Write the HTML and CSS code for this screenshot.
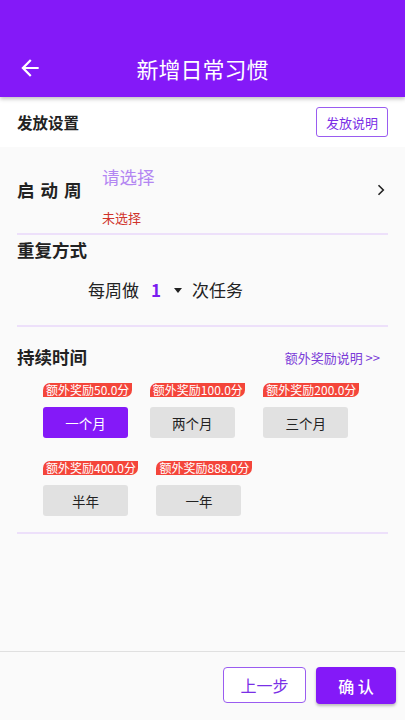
FILE: index.html
```html
<!DOCTYPE html>
<html lang="zh">
<head>
<meta charset="utf-8">
<link rel="stylesheet" href="styles.css">
</head>
<body>
<div class="page">
  <header class="appbar">
    <div class="toolbar">
      <svg class="back" viewBox="0 0 24 24" width="26" height="26"><path d="M20 11H7.83l5.59-5.59L12 4l-8 8 8 8 1.41-1.41L7.83 13H20v-2z" fill="#fff"/></svg>
      <div class="title">新增日常习惯</div>
    </div>
  </header>

  <div class="sec-head">
    <div class="sec-title">发放设置</div>
    <div class="outline-btn small">发放说明</div>
  </div>

  <main class="content">
    <div class="start-row">
      <div class="label spaced">启动周</div>
      <div class="pick">
        <div class="placeholder">请选择</div>
        <div class="unsel">未选择</div>
      </div>
      <svg class="chev" viewBox="0 0 8 12" width="8" height="12"><path d="M1.5 1.2 6.3 6 1.5 10.8" fill="none" stroke="#222" stroke-width="1.6"/></svg>
    </div>
    <div class="divider"></div>

    <div class="label rep-label">重复方式</div>
    <div class="rep-row">
      <span>每周做</span>
      <span class="num">1</span>
      <svg class="caret" viewBox="0 0 8 5" width="8" height="5"><path d="M0 0h8L4 5z" fill="#222"/></svg>
      <span>次任务</span>
    </div>
    <div class="divider"></div>

    <div class="dur-head">
      <div class="label">持续时间</div>
      <div class="link">额外奖励说明 &gt;&gt;</div>
    </div>
    <div class="grid">
      <div class="item"><div class="tag">额外奖励50.0分</div><div class="opt active">一个月</div></div>
      <div class="item"><div class="tag">额外奖励100.0分</div><div class="opt">两个月</div></div>
      <div class="item"><div class="tag">额外奖励200.0分</div><div class="opt">三个月</div></div>
      <div class="item"><div class="tag">额外奖励400.0分</div><div class="opt">半年</div></div>
      <div class="item"><div class="tag">额外奖励888.0分</div><div class="opt">一年</div></div>
    </div>
    <div class="divider"></div>
  </main>

  <footer class="footer">
    <div class="outline-btn big">上一步</div>
    <div class="fill-btn">确 认</div>
  </footer>
</div>
</body>
</html>
```

FILE: styles.css
```css
* { box-sizing: border-box; }
html, body { margin: 0; padding: 0; }
body {
  font-family: "Noto Sans CJK SC", "Noto Sans", sans-serif;
  background: #fafafa;
  color: #222;
}
.page {
  width: 405px;
  height: 720px;
  display: flex;
  flex-direction: column;
  overflow: hidden;
}
.appbar {
  height: 97px;
  background: #8419f8;
  padding-top: 40px;
  box-shadow: 0 2px 4px rgba(0,0,0,0.25);
  position: relative;
  z-index: 2;
  flex: none;
}
.toolbar {
  height: 57px;
  position: relative;
  display: flex;
  align-items: center;
  justify-content: center;
}
.back {
  position: absolute;
  left: 17px;
  top: 15px;
}
.title {
  color: #fff;
  font-size: 22px;
  line-height: 30px;
  margin-top: -1px;
}
.sec-head {
  height: 50px;
  background: #fff;
  display: flex;
  align-items: center;
  justify-content: space-between;
  padding: 0 17px;
  flex: none;
}
.sec-title {
  font-size: 15.5px;
  font-weight: 700;
}
.outline-btn {
  border: 1.5px solid #9a5cf0;
  border-radius: 3px;
  color: #7a2fe6;
  display: flex;
  align-items: center;
  justify-content: center;
  background: #fff;
}
.outline-btn.small {
  width: 72px;
  height: 30px;
  font-size: 13px;
}
.content {
  padding: 0 17px;
  flex: none;
}
.label {
  font-size: 17.5px;
  font-weight: 700;
  line-height: 24px;
}
.label.spaced { letter-spacing: 6px; width: 85px; }
.start-row {
  height: 86px;
  display: flex;
  align-items: center;
}
.pick {
  flex: 1;
  align-self: stretch;
  padding-top: 18px;
}
.placeholder {
  color: #b386f2;
  font-size: 17.5px;
  line-height: 24px;
}
.unsel {
  color: #d0342c;
  font-size: 13px;
  line-height: 18px;
  margin-top: 20px;
}
.chev { margin-right: 3px; }
.divider {
  height: 2px;
  background: #ede0fa;
}
.rep-label { margin-top: 3px; }
.rep-row {
  display: flex;
  align-items: center;
  font-size: 17px;
  line-height: 24px;
  padding-left: 71px;
  margin-top: 16px;
  margin-bottom: 23px;
}
.num {
  color: #7a1cf0;
  font-weight: 700;
  margin-left: 12px;
}
.caret { margin-left: 13px; margin-right: 10px; }
.dur-head {
  display: flex;
  align-items: center;
  justify-content: space-between;
  margin-top: 18px;
}
.link {
  color: #7b3ad8;
  font-size: 13px;
  margin-right: 8px;
}
.grid {
  display: flex;
  flex-wrap: wrap;
  column-gap: 18px;
  row-gap: 23px;
  padding-left: 26px;
  margin-top: 14px;
  margin-bottom: 16px;
}
.item {
  display: flex;
  flex-direction: column;
  align-items: flex-start;
}
.tag {
  background: #f4453a;
  color: #fff;
  font-size: 12px;
  line-height: 14px;
  height: 14px;
  padding: 0 2.5px 0 3px;
  border-radius: 7px 0 7px 0;
  white-space: nowrap;
}
.opt {
  margin-top: 10px;
  width: 85px;
  height: 31px;
  border-radius: 3px;
  background: #e1e1e1;
  display: flex;
  align-items: center;
  justify-content: center;
  font-size: 13.5px;
  color: #222;
}
.opt.active {
  background: #8419f8;
  color: #fff;
}
.footer {
  margin-top: auto;
  height: 69px;
  border-top: 1px solid #e0e0e0;
  display: flex;
  justify-content: flex-end;
  padding-top: 15px;
  padding-right: 9px;
  gap: 10px;
  flex: none;
}
.outline-btn.big {
  width: 83px;
  height: 36px;
  font-size: 16px;
  border-radius: 4px;
}
.fill-btn {
  width: 80px;
  height: 37px;
  background: #8419f8;
  color: #fff;
  border-radius: 4px;
  font-size: 16px;
  font-weight: 500;
  display: flex;
  align-items: center;
  justify-content: center;
  box-shadow: 0 2px 3px rgba(0,0,0,0.25);
}
```
